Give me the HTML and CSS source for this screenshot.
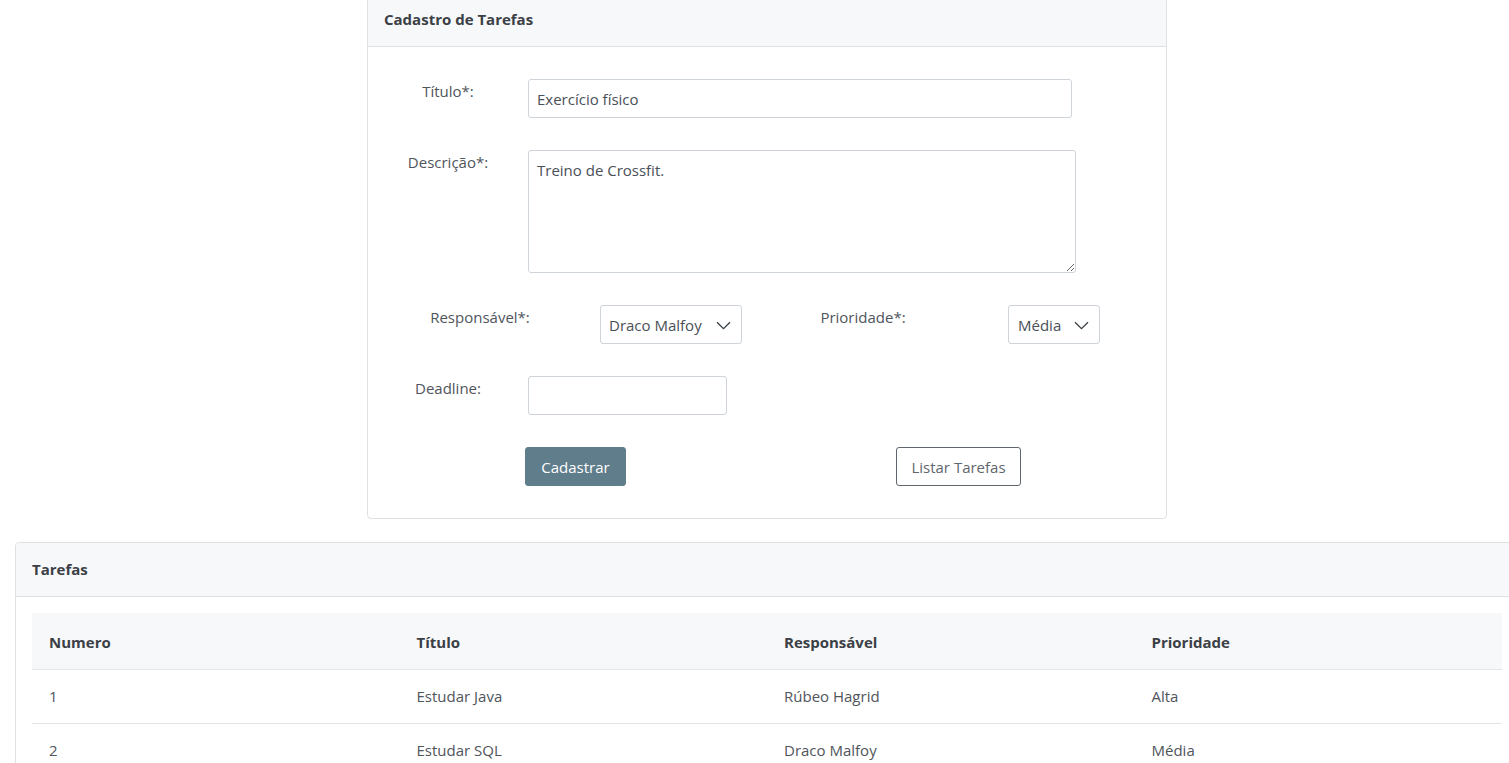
FILE: index.html
```html
<!DOCTYPE html>
<html lang="pt-BR">
<head>
<meta charset="utf-8">
<title>Cadastro de Tarefas</title>
<link rel="stylesheet" href="styles.css">
</head>
<body>
<section class="card card-form">
  <div class="card-header">Cadastro de Tarefas</div>
  <form class="card-body form">
    <div class="form-row">
      <label class="lbl lbl-main">Título*:</label>
      <input class="field field-title" type="text" value="Exercício físico">
    </div>
    <div class="form-row">
      <label class="lbl lbl-main">Descrição*:</label>
      <textarea class="field field-desc">Treino de Crossfit.</textarea>
    </div>
    <div class="form-row">
      <label class="lbl lbl-resp">Responsável*:</label>
      <div class="select select-resp">
        <span>Draco Malfoy</span>
        <svg class="chev" width="15" height="9" viewBox="0 0 15 9"><path d="M1 1.2 L7.5 7.6 L14 1.2" fill="none" stroke="#3a3f44" stroke-width="1.3"/></svg>
      </div>
      <label class="lbl lbl-prio">Prioridade*:</label>
      <div class="select select-prio">
        <span>Média</span>
        <svg class="chev" width="15" height="9" viewBox="0 0 15 9"><path d="M1 1.2 L7.5 7.6 L14 1.2" fill="none" stroke="#3a3f44" stroke-width="1.3"/></svg>
      </div>
    </div>
    <div class="form-row">
      <label class="lbl lbl-main">Deadline:</label>
      <input class="field field-deadline" type="text" value="">
    </div>
    <div class="form-row buttons">
      <button type="button" class="btn btn-primary">Cadastrar</button>
      <button type="button" class="btn btn-outline">Listar Tarefas</button>
    </div>
  </form>
</section>

<section class="card card-list">
  <div class="card-header">Tarefas</div>
  <div class="card-body list-body">
    <table class="table">
      <thead>
        <tr><th>Numero</th><th>Título</th><th>Responsável</th><th>Prioridade</th></tr>
      </thead>
      <tbody>
        <tr><td>1</td><td>Estudar Java</td><td>Rúbeo Hagrid</td><td>Alta</td></tr>
        <tr><td>2</td><td>Estudar SQL</td><td>Draco Malfoy</td><td>Média</td></tr>
      </tbody>
    </table>
  </div>
</section>
</body>
</html>
```

FILE: styles.css
```css
html, body {
  overflow: hidden;
}
body {
  margin: 0;
  font-family: "Open Sans", "Noto Sans", sans-serif;
  font-size: 15px;
  color: #495057;
  background: #fff;
}
.card {
  border: 1px solid #dfe1e4;
  border-radius: 4px;
  background: #fff;
  box-sizing: border-box;
}
.card-form {
  width: 800px;
  margin: -8px 0 0 367px;
}
.card-list {
  width: 1505px;
  margin: 23px 0 0 15px;
}
.card-header {
  background: #f7f8f9;
  border-bottom: 1px solid #dfe1e4;
  padding: 15px 16px;
  line-height: 23px;
  font-weight: 700;
  color: #3b4046;
  border-radius: 4px 4px 0 0;
}
.form {
  padding: 32px 16px 32px 16px;
  display: flex;
  flex-direction: column;
  gap: 32px;
}
.form-row {
  display: flex;
  align-items: flex-start;
}
.lbl {
  display: block;
  text-align: center;
  line-height: 22px;
  padding-top: 1px;
  color: #4f555b;
  flex: none;
}
.lbl-main {
  width: 128px;
  margin-right: 16px;
}
.lbl-resp {
  width: 128px;
  margin-left: 32px;
  margin-right: 56px;
}
.lbl-prio {
  width: 128px;
  margin-left: 57px;
  margin-right: 81px;
}
.field {
  font-family: inherit;
  font-size: 15px;
  color: #495057;
  border: 1px solid #ced4da;
  border-radius: 3px;
  box-sizing: border-box;
  padding: 0 8px;
  background: #fff;
  margin: 0;
}
.field-title {
  width: 544px;
  height: 39px;
}
.field-desc {
  width: 548px;
  height: 123px;
  padding: 8px 8px;
  line-height: 22px;
  resize: both;
  display: block;
}
.field-deadline {
  width: 199px;
  height: 39px;
}
.select {
  flex: none;
  box-sizing: border-box;
  height: 39px;
  border: 1px solid #ced4da;
  border-radius: 3px;
  display: flex;
  align-items: center;
  justify-content: space-between;
  padding: 0 10px 0 8px;
  color: #495057;
}
.select span {
  line-height: 22px;
}
.select-resp {
  width: 142px;
}
.select-prio {
  width: 92px;
  padding-left: 9px;
}
.chev {
  display: block;
  margin-top: 1px;
}
.buttons {
  padding-left: 141px;
}
.btn {
  font-family: inherit;
  font-size: 15px;
  height: 39px;
  border-radius: 3px;
  box-sizing: border-box;
  line-height: 22px;
  padding: 0;
  cursor: pointer;
}
.btn-primary {
  width: 101px;
  background: #607d8b;
  border: 1px solid #607d8b;
  color: #fff;
}
.btn-outline {
  width: 125px;
  margin-left: 270px;
  background: #fff;
  border: 1px solid #5f666d;
  color: #5f666d;
}
.list-body {
  padding: 16px;
}
.table {
  width: 1470px;
  border-collapse: collapse;
  table-layout: fixed;
}
.table th,
.table td {
  text-align: left;
  padding: 15px 17px;
  line-height: 23px;
  border-bottom: 1px solid #e3e5e8;
}
.table th {
  padding: 18px 17px 15px;
  background: #f7f8f9;
  font-weight: 700;
  color: #3b4046;
}
.table td {
  color: #4f555b;
}
```
